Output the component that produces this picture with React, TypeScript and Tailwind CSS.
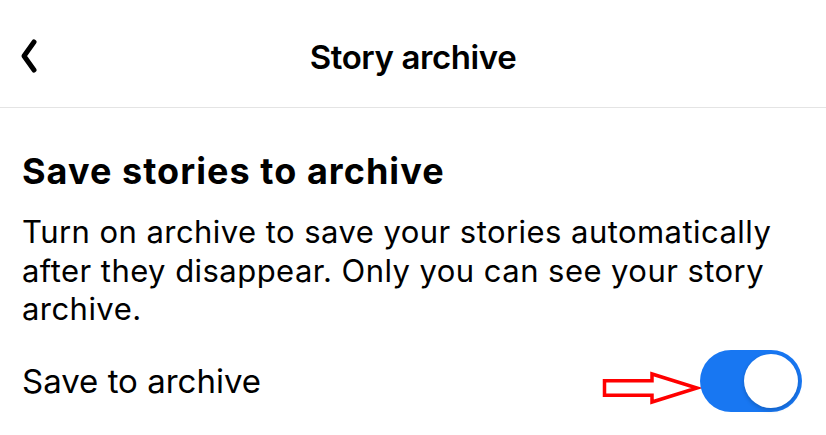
import React from "react";

export default function App() {
  return (
    <div className="w-[826px] h-[435px] bg-white overflow-hidden text-black" style={{ fontFamily: "Inter, 'Noto Sans', sans-serif" }}>
      <div className="relative h-[108px] flex justify-center border-b border-[#e4e4e4]">
        <svg className="absolute left-[20px] top-[38px]" width="20" height="36" viewBox="0 0 20 36">
          <path d="M14 4 L4 18 L14 32" fill="none" stroke="#000" strokeWidth="5" strokeLinecap="round" strokeLinejoin="round" />
        </svg>
        <div className="pt-[37px] text-[33px] leading-[40px] font-semibold tracking-[-0.4px]">Story archive</div>
      </div>
      <div className="px-[22px] pt-[41px]">
        <h1 className="text-[36px] font-bold leading-[44px] tracking-[1.05px]">Save stories to archive</h1>
        <p className="mt-[20px] text-[31px] leading-[38.5px] tracking-[0.45px]">
          Turn on archive to save your stories automatically after they disappear. Only you can see your story archive.
        </p>
        <div className="flex items-center justify-between mt-[21px]">
          <span className="text-[33px] leading-[40px]">Save to archive</span>
          <div className="flex items-center mr-[2px]">
            <svg width="100" height="36" viewBox="0 0 100 36" className="mr-[-2px] mt-[14px]">
              <path d="M2.5 10.7 L50 10.7 L50 4 L95 18 L50 32 L50 25.3 L2.5 25.3 Z" fill="none" stroke="#ff0000" strokeWidth="3.5" strokeLinejoin="miter" />
            </svg>
            <div className="w-[102px] h-[62px] rounded-full bg-[#1877f2] flex items-center justify-end pr-[4px]">
              <div className="w-[54px] h-[54px] rounded-full bg-white shadow-[0_2px_4px_rgba(0,0,0,0.2)]" />
            </div>
          </div>
        </div>
      </div>
    </div>
  );
}
